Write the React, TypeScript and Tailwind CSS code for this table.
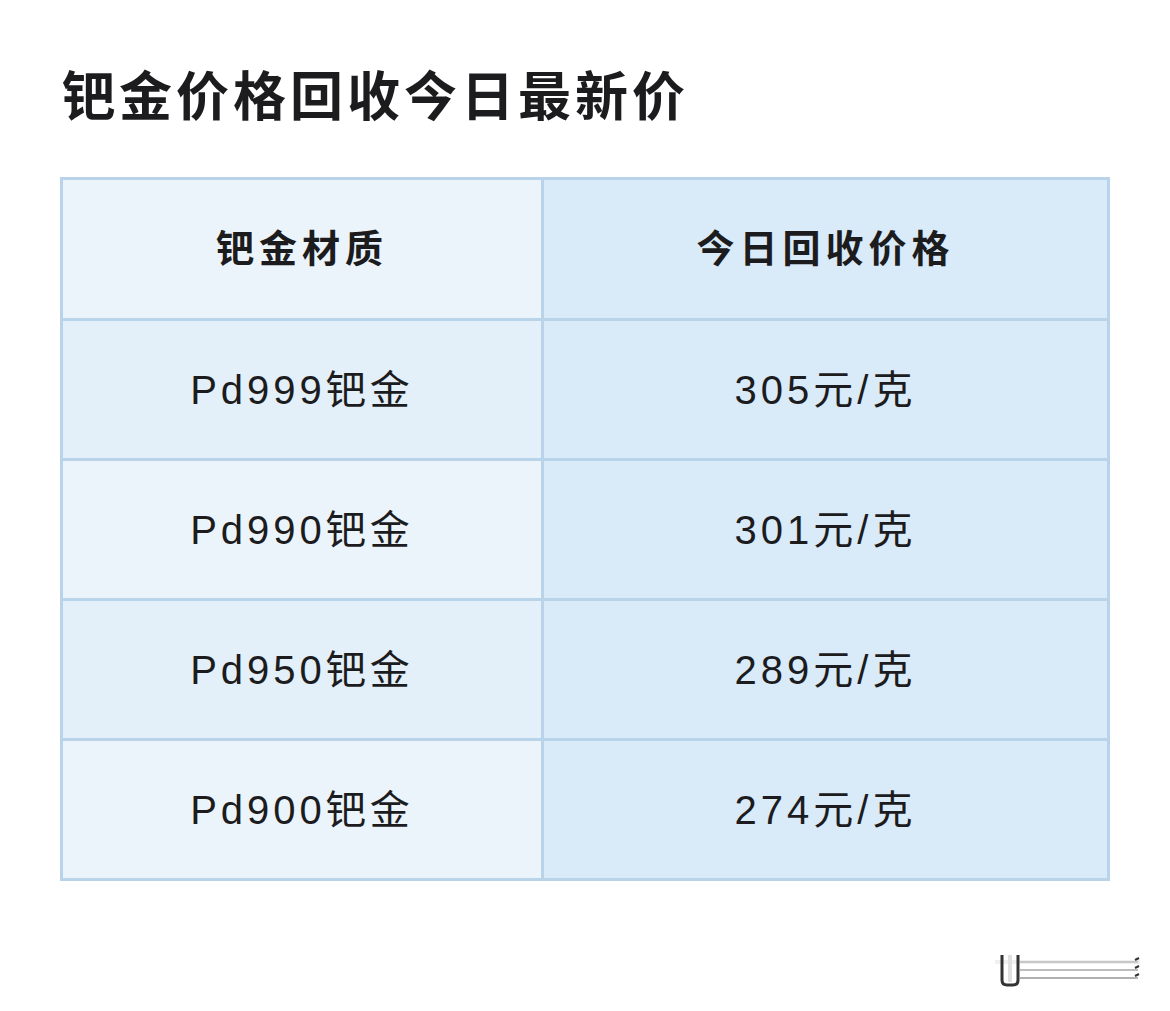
import React from 'react';

const rows = [
  { name: 'Pd999钯金', price: '305元/克' },
  { name: 'Pd990钯金', price: '301元/克' },
  { name: 'Pd950钯金', price: '289元/克' },
  { name: 'Pd900钯金', price: '274元/克' },
];

const font = { fontFamily: '"Liberation Sans", "Noto Sans CJK SC", sans-serif' };

export default function App() {
  return (
    <div className="relative w-[1170px] h-[1011px] bg-white text-[#1c1c1e]" style={font}>
      <div className="pl-[62px] pt-[62px]">
        <h1 className="text-[53px] leading-[72px] font-bold tracking-[4px]">钯金价格回收今日最新价</h1>
      </div>

      <div className="ml-[60px] mt-[43px] w-[1050px] border-[3px] border-[#b9d3ea]">
        {/* header */}
        <div className="grid grid-cols-[478px_3px_1fr] h-[138px]">
          <div className="flex items-center justify-center bg-[#ecf4fb] text-[38px] font-bold tracking-[5px]">钯金材质</div>
          <div className="bg-[#b9d3ea]" />
          <div className="flex items-center justify-center bg-[#d9eaf9] text-[38px] font-bold tracking-[5px]">今日回收价格</div>
        </div>

        {rows.map((r, i) => (
          <div key={r.name} className="border-t-[3px] border-[#b9d3ea] grid grid-cols-[478px_3px_1fr] h-[140px]">
            <div
              className={`flex items-center justify-center text-[40px] tracking-[4px] ${
                i % 2 === 0 ? 'bg-[#e3eff9]' : 'bg-[#ecf4fb]'
              }`}
            >
              {r.name}
            </div>
            <div className="bg-[#b9d3ea]" />
            <div className="flex items-center justify-center bg-[#d9eaf9] text-[40px] tracking-[4px]">{r.price}</div>
          </div>
        ))}
      </div>

      {/* watermark */}
      <svg className="absolute left-[995px] top-[950px]" width="160" height="45" viewBox="0 0 160 45">
        <path d="M0 12 H145" stroke="#f0f0f0" strokeWidth="4" />
        <path d="M25 12 H143" stroke="#c8c8c8" strokeWidth="2" />
        <path d="M25 20 H143" stroke="#bdbdbd" strokeWidth="2" />
        <path d="M25 28 H143" stroke="#b0b0b0" strokeWidth="2" />
        <path d="M140 10 l4 -2 M140 18 l4 -2 M140 26 l4 -2" stroke="#333" strokeWidth="2" />
        <path d="M7 5 V30 Q7 35 12 35 H18 Q23 35 23 30 V5" fill="none" stroke="#333" strokeWidth="3" />
        <path d="M15 5 V32" stroke="#e0e0e0" strokeWidth="4" />
      </svg>
    </div>
  );
}
